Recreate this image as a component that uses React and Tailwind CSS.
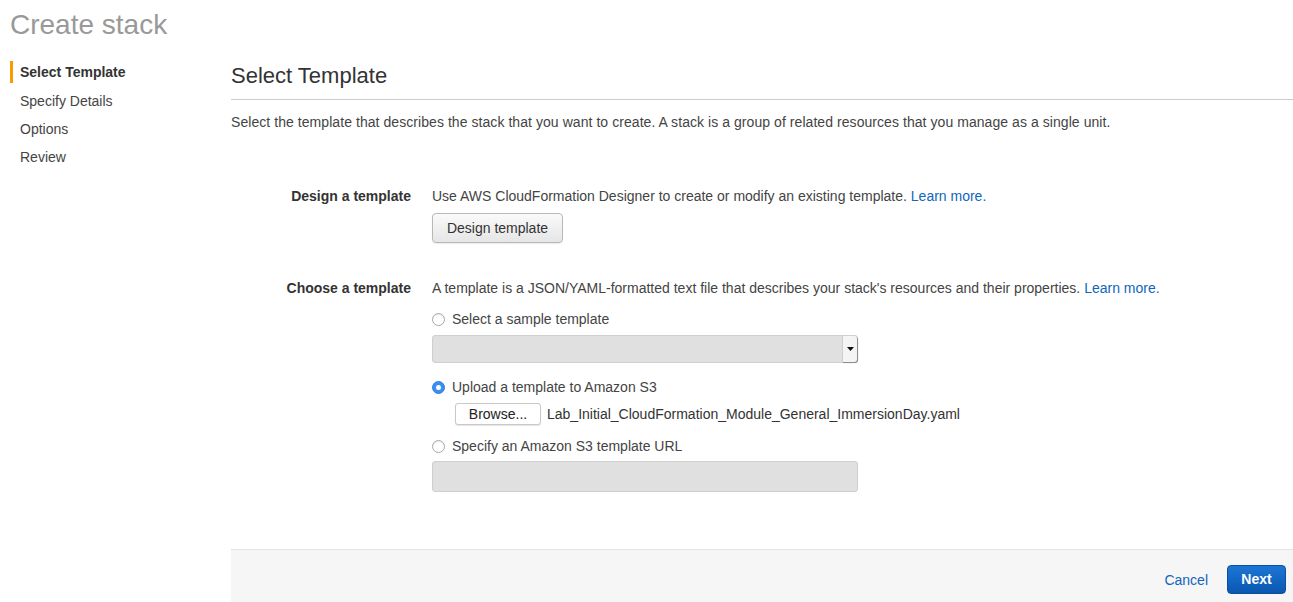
import React from "react";

function Radio({ checked, label }) {
  return (
    <div className="flex items-center h-[20px]">
      {checked ? (
        <span className="w-[13px] h-[13px] rounded-full bg-[#3b8ff0] border border-[#2f7fe0] flex items-center justify-center">
          <span className="w-[5px] h-[5px] rounded-full bg-white" />
        </span>
      ) : (
        <span className="w-[13px] h-[13px] rounded-full bg-white border border-[#a8a8a8] shadow-[inset_0_1px_1px_rgba(0,0,0,0.08)]" />
      )}
      <span className="ml-[7px]">{label}</span>
    </div>
  );
}

export default function App() {
  return (
    <div
      className="w-[1293px] h-[602px] bg-white text-[#444] text-[14px] overflow-hidden flex flex-col"
      style={{ fontFamily: '"Liberation Sans", Arial, sans-serif' }}
    >
      <h1 className="pl-[10px] pt-[7px] h-[52px] text-[28px] leading-[36px] text-[#999] font-normal shrink-0">
        Create stack
      </h1>

      <div className="flex flex-1 min-h-0">
        {/* Side steps */}
        <div className="w-[231px] pl-[10px] shrink-0">
          <div className="flex flex-col">
            <div className="border-l-[3px] border-[#f90] pl-[7px] h-[22px] leading-[22px] font-bold text-[#333] text-[14px] mt-[9px]">
              Select Template
            </div>
            <div className="pl-[10px] h-[28px] leading-[28px] mt-[4px]">Specify Details</div>
            <div className="pl-[10px] h-[28px] leading-[28px]">Options</div>
            <div className="pl-[10px] h-[28px] leading-[28px]">Review</div>
          </div>
        </div>

        {/* Main */}
        <div className="flex-1 flex flex-col">
          <div className="h-[48px] border-b border-[#ccc] flex items-center">
            <h2 className="text-[22px] text-[#333] font-normal leading-[26px] mt-[1px]">Select Template</h2>
          </div>
          <p className="mt-[13px] leading-[18px] tracking-[0.06px]">
            Select the template that describes the stack that you want to create. A stack is a group of related resources that you manage as a single unit.
          </p>

          <div className="mt-[56px] flex">
            <div className="w-[180px] text-right font-bold text-[#333] leading-[18px]">Design a template</div>
            <div className="ml-[21px] flex flex-col">
              <div className="leading-[18px]">
                Use AWS CloudFormation Designer to create or modify an existing template.{" "}
                <a className="text-[#1166bb]">Learn more.</a>
              </div>
              <button className="mt-[8px] w-[131px] h-[30px] rounded-[4px] border border-[#b8b8b8] bg-gradient-to-b from-[#fafafa] to-[#e6e6e6] text-[#333] text-[14px] shadow-[0_1px_1px_rgba(0,0,0,0.08)]">
                Design template
              </button>
            </div>
          </div>

          <div className="mt-[36px] flex">
            <div className="w-[180px] text-right font-bold text-[#333] leading-[18px]">Choose a template</div>
            <div className="ml-[21px] flex flex-col">
              <div className="leading-[18px]">
                A template is a JSON/YAML-formatted text file that describes your stack's resources and their properties.{" "}
                <a className="text-[#1166bb]">Learn more.</a>
              </div>
              <div className="mt-[12px]">
                <Radio label="Select a sample template" />
              </div>
              <div className="mt-[6px] w-[426px] h-[28px] rounded-[3px] border border-[#cfcfcf] bg-[#e0e0e0] flex justify-end">
                <div className="w-[15px] h-full bg-[#f4f4f4] border-l border-[#cfcfcf] rounded-r-[3px] shadow-[1px_1px_1px_rgba(0,0,0,0.35)] flex items-center justify-center">
                  <svg width="7" height="4" viewBox="0 0 7 4">
                    <path d="M0 0h7L3.5 4z" fill="#111" />
                  </svg>
                </div>
              </div>
              <div className="mt-[14px]">
                <Radio checked label="Upload a template to Amazon S3" />
              </div>
              <div className="mt-[6px] ml-[23px] flex items-center">
                <button className="w-[86px] h-[22px] rounded-[3px] border border-[#c8c8c8] bg-white text-[#222] text-[14px] leading-[20px] shadow-[0_1px_1px_rgba(0,0,0,0.1)]">
                  Browse...
                </button>
                <span className="ml-[6px] text-[#333]">Lab_Initial_CloudFormation_Module_General_ImmersionDay.yaml</span>
              </div>
              <div className="mt-[11px]">
                <Radio label="Specify an Amazon S3 template URL" />
              </div>
              <div className="mt-[5px] w-[426px] h-[31px] rounded-[3px] border border-[#cfcfcf] bg-[#e0e0e0]" />
            </div>
          </div>
        </div>
      </div>

      {/* Footer */}
      <div className="flex shrink-0">
        <div className="w-[231px] shrink-0" />
        <div className="flex-1 h-[53px] bg-[#f6f6f6] border-t border-[#e4e4e4] flex items-center justify-end pr-[7px]">
          <a className="text-[#1166bb] mr-[19px] mt-[8px]">Cancel</a>
          <button className="w-[59px] h-[29px] rounded-[4px] bg-gradient-to-b from-[#1c76d6] to-[#0a57b0] border border-[#0a4f9f] text-white font-bold text-[14px] mt-[7px]">
            Next
          </button>
        </div>
      </div>
    </div>
  );
}
